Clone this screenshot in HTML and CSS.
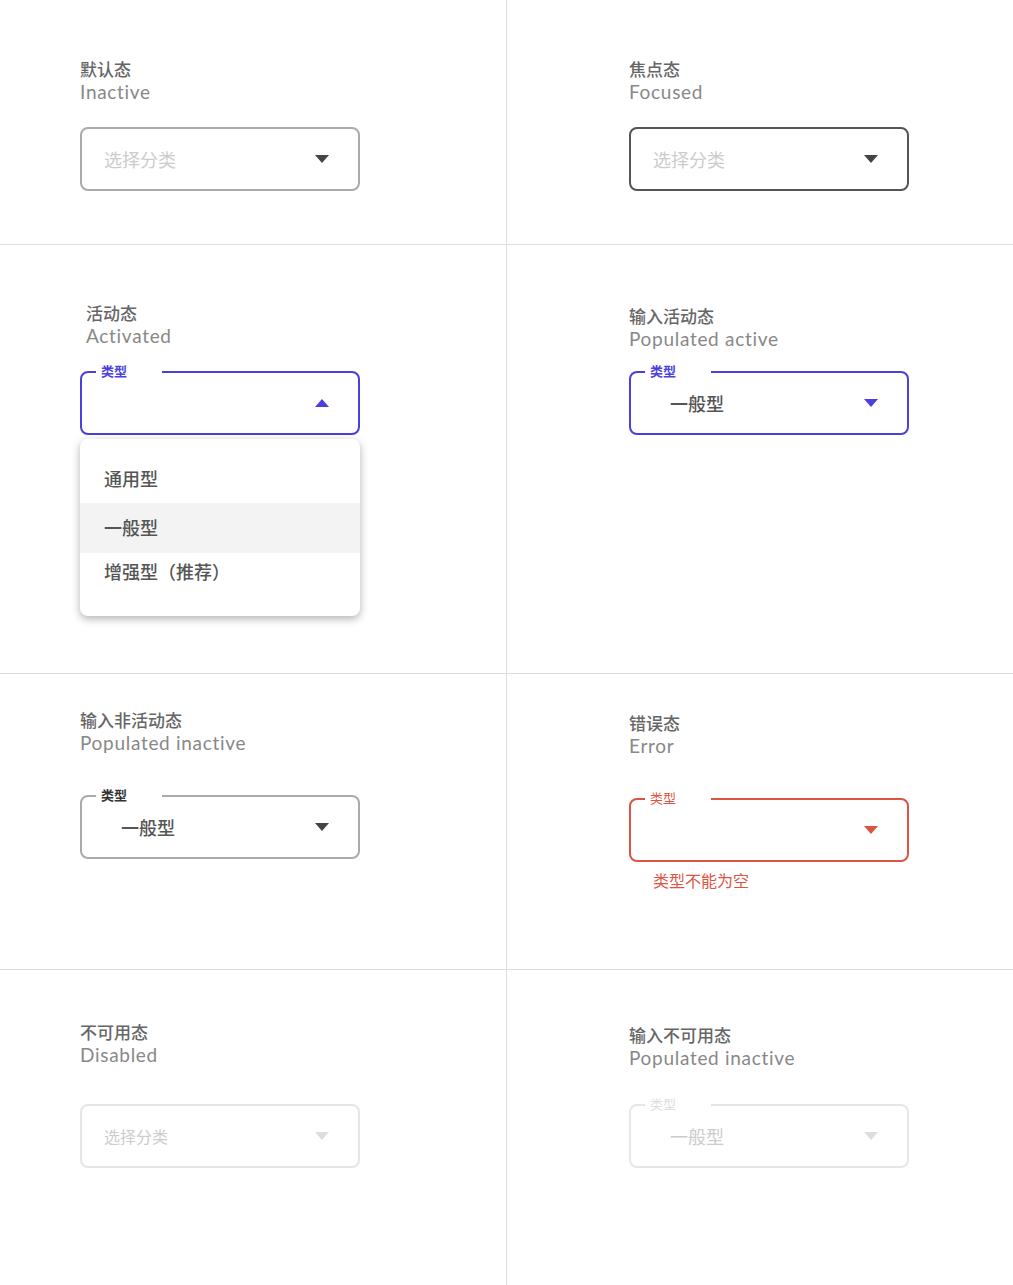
FILE: index.html
```html
<!DOCTYPE html>
<html lang="zh-CN">
<head>
	<meta charset="UTF-8">
	<title>Select 状态</title>
	<link rel="stylesheet" href="styles.css">
</head>
<body>
	<div class="grid">
		<div class="cell r1 left">
			<div class="title"><p class="cn">默认态</p><p class="en">Inactive</p></div>
			<div class="sel">
				<span class="ph">选择分类</span>
				<i class="arrow"></i>
			</div>
		</div>
		<div class="cell r1 right">
			<div class="title"><p class="cn">焦点态</p><p class="en">Focused</p></div>
			<div class="sel focus">
				<span class="ph">选择分类</span>
				<i class="arrow"></i>
			</div>
		</div>

		<div class="cell r2 left act">
			<div class="title"><p class="cn">活动态</p><p class="en">Activated</p></div>
			<div class="sel active">
				<span class="lab">类型</span>
				<span class="val"></span>
				<i class="arrow up"></i>
				<ul class="menu">
					<li>通用型</li>
					<li class="on">一般型</li>
					<li>增强型（推荐）</li>
				</ul>
			</div>
		</div>
		<div class="cell r2 right">
			<div class="title"><p class="cn">输入活动态</p><p class="en">Populated active</p></div>
			<div class="sel active">
				<span class="lab">类型</span>
				<span class="val">一般型</span>
				<i class="arrow"></i>
			</div>
		</div>

		<div class="cell r3 left">
			<div class="title"><p class="cn">输入非活动态</p><p class="en">Populated inactive</p></div>
			<div class="sel filled">
				<span class="lab">类型</span>
				<span class="val">一般型</span>
				<i class="arrow"></i>
			</div>
		</div>
		<div class="cell r3 right">
			<div class="title"><p class="cn">错误态</p><p class="en">Error</p></div>
			<div class="sel error">
				<span class="lab">类型</span>
				<span class="val"></span>
				<i class="arrow"></i>
			</div>
			<p class="err_msg">类型不能为空</p>
		</div>

		<div class="cell r4 left">
			<div class="title"><p class="cn">不可用态</p><p class="en">Disabled</p></div>
			<div class="sel disabled">
				<span class="ph">选择分类</span>
				<i class="arrow"></i>
			</div>
		</div>
		<div class="cell r4 right">
			<div class="title"><p class="cn">输入不可用态</p><p class="en">Populated inactive</p></div>
			<div class="sel disabled">
				<span class="lab">类型</span>
				<span class="val">一般型</span>
				<i class="arrow"></i>
			</div>
		</div>
	</div>
</body>
</html>
```

FILE: styles.css
```css
*{margin:0;padding:0;box-sizing:border-box;}
ul{list-style:none;}
body{background:#fff;font-family:"Lato","Noto Sans CJK SC",sans-serif;}

.grid{display:grid;grid-template-columns:507px 506px;grid-template-rows:245px 429px 296px 315px;width:1013px;}
.cell{border-bottom:1px solid #ddd;}
.cell.left{border-right:1px solid #ddd;padding-left:80px;}
.cell.right{padding-left:122px;}
.cell.r4{border-bottom:none;}

.title .cn{font-family:"Noto Sans CJK SC",sans-serif;font-size:17px;line-height:24px;color:#666;font-weight:500;}
.title .en{font-family:"Lato","Noto Sans CJK SC",sans-serif;font-size:19px;line-height:22px;color:#888;letter-spacing:0.7px;}

/* 每格标题与框的位置不一样，按图对齐 */
.r1{padding-top:57px;}
.r1 .sel{margin-top:24px;}
.r2.left{padding-top:56px;padding-left:86px;}
.r2.left .sel{margin-top:24px;margin-left:-6px;}
.r2.right{padding-top:59px;}
.r2.right .sel{margin-top:21px;}
.r3.left{padding-top:34px;}
.r3.left .sel{margin-top:41px;}
.r3.right{padding-top:37px;}
.r3.right .sel{margin-top:41px;}
.r4.left{padding-top:50px;}
.r4.left .sel{margin-top:38px;}
.r4.right{padding-top:53px;}
.r4.right .sel{margin-top:35px;}

.sel{position:relative;width:280px;height:64px;border:2px solid #aaa;border-radius:8px;display:flex;align-items:center;padding-left:22px;font-family:"Noto Sans CJK SC",sans-serif;}
.sel .ph{font-size:18px;color:#ccc;}
.sel .val{font-size:18px;color:#555;padding-left:17px;font-weight:500;}
.sel .arrow{position:absolute;right:29px;top:26px;width:0;height:0;border-left:7px solid transparent;border-right:7px solid transparent;border-top:8px solid #444;}
.sel .arrow.up{border-top:none;border-bottom:8px solid #4b3fde;}
.sel .lab{position:absolute;left:14px;top:-9px;background:#fff;padding:0 35px 0 5px;font-size:13px;line-height:14px;font-weight:bold;color:#333;}

.sel.focus{border-color:#555;}

.sel.active{border-color:#4b3fde;}
.sel.active .lab{color:#4b3fde;}
.sel.active .arrow{border-top-color:#4b3fde;}

.sel.error{border-color:#de5443;}
.sel.error .lab{color:#de5443;font-weight:normal;}
.sel.error .arrow{border-top-color:#de5443;}
.err_msg{font-family:"Noto Sans CJK SC",sans-serif;font-size:16px;line-height:20px;color:#de5443;padding-left:24px;margin-top:8px;}

.sel.disabled{border-color:#e6e6e6;}
.sel.disabled .ph{font-size:16px;color:#ccc;}
.sel.disabled .val{color:#ccc;font-weight:normal;}
.sel.disabled .lab{color:#ddd;font-weight:normal;}
.sel.disabled .arrow{border-top-color:#ddd;}

.menu{position:absolute;left:-2px;top:66px;width:280px;height:177px;background:#fff;border-radius:8px;box-shadow:0 3px 8px rgba(0,0,0,0.3);padding-top:16px;z-index:5;}
.menu li{height:48px;line-height:46px;padding-left:24px;font-size:18px;color:#555;font-weight:500;}
.menu li.on{background:#f3f3f3;height:50px;line-height:48px;}
.menu li:last-child{line-height:36px;}
```
